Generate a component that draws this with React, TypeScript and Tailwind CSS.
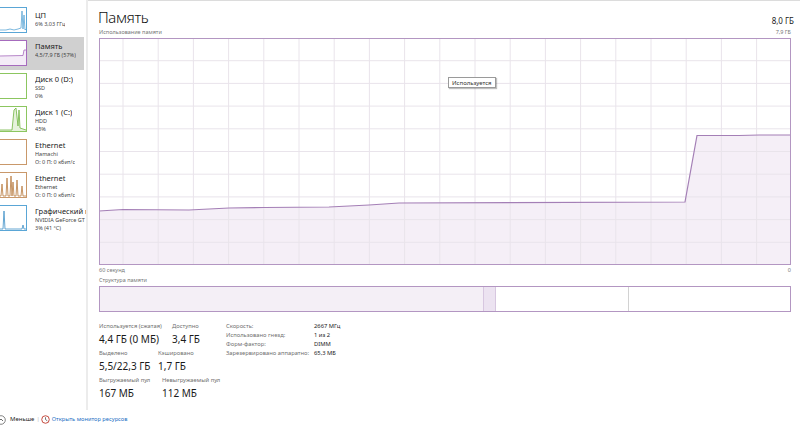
import React from "react";

const font = { fontFamily: '"Noto Sans", "Open Sans", sans-serif' };

type Item = {
  name: string;
  lines: string[];
  thumb: React.ReactNode;
  selected?: boolean;
};

function Thumb({ border, fill, children }: { border: string; fill?: string; children?: React.ReactNode }) {
  return (
    <svg width="29" height="26" viewBox="0 0 29 26" className="shrink-0 -ml-[2px]">
      <rect x="0.5" y="0.5" width="28" height="25" fill={fill ?? "#fff"} stroke={border} />
      {children}
    </svg>
  );
}

const items: Item[] = [
  {
    name: "ЦП",
    lines: ["6% 3,03 ГГц"],
    thumb: (
      <Thumb border="#5aa6d6">
        <polyline points="1,23 8,23 12,22 16,23 20,22 23,21 24,4 25,22 26,8 27,23 28,22" fill="none" stroke="#5aa6d6" strokeWidth="0.8" />
      </Thumb>
    ),
  },
  {
    name: "Память",
    lines: ["4,5/7,9 ГБ (57%)"],
    selected: true,
    thumb: (
      <Thumb border="#a66bbd" fill="#fff">
        <path d="M1,16 L25,15.5 L26,10 L28,10 L28,25 L1,25 Z" fill="#f4ecf7" />
        <polyline points="1,16 25,15.5 26,10 28,10" fill="none" stroke="#a66bbd" strokeWidth="0.8" />
      </Thumb>
    ),
  },
  {
    name: "Диск 0 (D:)",
    lines: ["SSD", "0%"],
    thumb: <Thumb border="#8cc660" />,
  },
  {
    name: "Диск 1 (C:)",
    lines: ["HDD", "45%"],
    thumb: (
      <Thumb border="#8cc660" fill="#fff">
        <path d="M1,24 L14,24 L16,4 L18,2 L20,20 L21,4 L22,22 L28,24 L28,25 L1,25 Z" fill="#e6f2dc" />
        <polyline points="1,24 14,24 16,4 18,2 20,20 21,4 22,22 28,24" fill="none" stroke="#6fb43f" strokeWidth="0.8" />
      </Thumb>
    ),
  },
  {
    name: "Ethernet",
    lines: ["Hamachi", "О: 0 П: 0 кбит/с"],
    thumb: <Thumb border="#c9986a" />,
  },
  {
    name: "Ethernet",
    lines: ["Ethernet", "О: 0 П: 0 кбит/с"],
    thumb: (
      <Thumb border="#c9986a">
        <polyline
          points="1,24 3,24 4,12 5,24 8,24 9,6 10,24 12,24 13,4 14,24 15,10 16,24 18,24 19,8 20,24 23,24 24,14 25,24 28,24"
          fill="none"
          stroke="#b77a3e"
          strokeWidth="0.8"
        />
      </Thumb>
    ),
  },
  {
    name: "Графический п",
    lines: ["NVIDIA GeForce GT", "3% (41 °C)"],
    thumb: (
      <Thumb border="#5aa6d6">
        <polyline points="1,24 5,24 6,6 7,24 24,24 25,20 26,24 28,24" fill="none" stroke="#3d8fc6" strokeWidth="0.8" />
      </Thumb>
    ),
  },
];

function Sidebar() {
  return (
    <div className="w-[88px] shrink-0 border-r-2 border-[#ececec] pt-[4px] overflow-hidden">
      {items.map((it, i) => (
        <div
          key={i}
          className={
            "h-[33px] flex items-start gap-[8px] pt-[3px] " +
            (it.selected ? "bg-[#d0d0d0] w-[84px]" : "")
          }
        >
          {it.thumb}
          <div className={"flex flex-col whitespace-nowrap overflow-hidden " + (i === 0 ? "pt-[4px]" : "pt-[2px]")}>
            <span className="text-[7.5px] leading-[9px] text-[#1a1a1a]">{it.name}</span>
            {it.lines.map((l, j) => (
              <span key={j} className="text-[5.5px] leading-[8px] text-[#444]">
                {l}
              </span>
            ))}
          </div>
        </div>
      ))}
    </div>
  );
}

const gridX = Array.from({ length: 19 }, (_, k) => 24 + k * 35.2);
const gridY = Array.from({ length: 9 }, (_, k) => 22.7 * (k + 1));

const linePts: [number, number][] = [
  [0, 173],
  [24, 171.5],
  [90, 172],
  [130, 170],
  [165, 169.5],
  [230, 169],
  [270, 167],
  [300, 165],
  [586, 164],
  [598, 97.5],
  [640, 97.5],
  [660, 97],
  [692, 97],
];

function UsageChart() {
  const line = linePts.map((p) => p.join(",")).join(" ");
  const area = `M0,227 L${linePts.map((p) => p.join(",")).join(" L")} L692,227 Z`;
  return (
    <div className="relative">
      <svg width="692" height="227" viewBox="0 0 692 227" className="block">
        <rect x="0" y="0" width="692" height="227" fill="#fff" />
        <path d={area} fill="#f5eff7" />
        {gridX.map((x) => (
          <line key={x} x1={x} y1="0" x2={x} y2="227" stroke="#e9e4eb" strokeWidth="1" />
        ))}
        {gridY.map((y) => (
          <line key={y} x1="0" y1={y} x2="692" y2={y} stroke="#e9e4eb" strokeWidth="1" />
        ))}
        <polyline points={line} fill="none" stroke="#a47fb6" strokeWidth="1.2" />
        <rect x="0.5" y="0.5" width="691" height="226" fill="none" stroke="#b396c2" strokeWidth="1" />
      </svg>
      <div className="absolute left-[349px] top-[39px] bg-white border border-[#9a9a9a] shadow-[1px_1px_1px_rgba(0,0,0,0.25)] px-[3px] h-[11px] flex items-center">
        <span className="text-[6px] leading-none text-[#333]">Используется</span>
      </div>
    </div>
  );
}

function StructureBar() {
  return (
    <div className="h-[26px] border border-[#b396c2] flex">
      <div className="w-[383px] bg-[#f4eff6]" />
      <div className="w-[13px] bg-[#ece3f1] border-x border-[#d7c7e0]" />
      <div className="w-[133px] bg-white border-r border-[#d2d2d2]" />
      <div className="flex-1 bg-white" />
    </div>
  );
}

function Stat({ label, value, w }: { label: string; value: string; w?: string }) {
  return (
    <div className={"flex flex-col " + (w ?? "")}>
      <span className="text-[5.8px] leading-[9px] text-[#707070] whitespace-nowrap">{label}</span>
      <span className="text-[10px] leading-[17px] text-[#1a1a1a] whitespace-nowrap">{value}</span>
    </div>
  );
}

function Details() {
  const rows = [
    ["Скорость:", "2667 МГц"],
    ["Использовано гнезд:", "1 из 2"],
    ["Форм-фактор:", "DIMM"],
    ["Зарезервировано аппаратно:", "65,3 МБ"],
  ];
  return (
    <div className="flex mt-[10px]">
      <div className="flex flex-col gap-[1px] w-[127px] shrink-0">
        <div className="flex">
          <Stat label="Используется (сжатая)" value="4,4 ГБ (0 МБ)" w="w-[73px]" />
          <Stat label="Доступно" value="3,4 ГБ" />
        </div>
        <div className="flex">
          <Stat label="Выделено" value="5,5/22,3 ГБ" w="w-[59px]" />
          <Stat label="Кэшировано" value="1,7 ГБ" />
        </div>
        <div className="flex">
          <Stat label="Выгружаемый пул" value="167 МБ" w="w-[63px]" />
          <Stat label="Невыгружаемый пул" value="112 МБ" />
        </div>
      </div>
      <div className="flex flex-col">
        {rows.map(([k, v]) => (
          <div key={k} className="flex h-[9px] items-center">
            <span className="w-[88px] text-[5.8px] text-[#707070] whitespace-nowrap">{k}</span>
            <span className="text-[5.8px] text-[#1a1a1a] whitespace-nowrap">{v}</span>
          </div>
        ))}
      </div>
    </div>
  );
}

function Main() {
  return (
    <div className="flex-1 border-t border-[#dcdcdc] pl-[11px]">
      <div className="w-[692px]">
        <div className="flex justify-between items-end h-[26px] pt-[6px]">
          <span className="text-[15px] leading-[20px] font-light tracking-[-0.4px] text-[#111] -ml-[1px]">Память</span>
          <span className="text-[8px] leading-[12px] text-[#222] -mr-[3px]">8,0 ГБ</span>
        </div>
        <div className="flex justify-between h-[11px] items-center">
          <span className="text-[5.5px] text-[#777]">Использование памяти</span>
          <span className="text-[5.5px] text-[#777]">7,9 ГБ</span>
        </div>
        <UsageChart />
        <div className="flex justify-between h-[10px] items-center">
          <span className="text-[5.5px] text-[#777]">60 секунд</span>
          <span className="text-[5.5px] text-[#777]">0</span>
        </div>
        <div className="flex h-[11px] items-center">
          <span className="text-[5.5px] text-[#777]">Структура памяти</span>
        </div>
        <StructureBar />
        <Details />
      </div>
    </div>
  );
}

export default function App() {
  return (
    <div className="w-[800px] h-[429px] bg-white flex flex-col overflow-hidden" style={font}>
      <div className="flex h-[410px]">
        <Sidebar />
        <Main />
      </div>
      <div className="flex items-center h-[19px] text-[6px]">
        <svg width="10" height="10" viewBox="0 0 10 10" className="-ml-[4px]">
          <circle cx="5" cy="5" r="4.3" fill="none" stroke="#666" strokeWidth="0.8" />
          <polyline points="3,6 5,4 7,6" fill="none" stroke="#444" strokeWidth="0.8" />
        </svg>
        <span className="ml-[4px] text-[#222]">Меньше</span>
        <span className="ml-[2px] mr-[1px] text-[#bbb]">|</span>
        <svg width="9" height="9" viewBox="0 0 10 10">
          <circle cx="5" cy="5" r="4.2" fill="#fff" stroke="#c0392b" strokeWidth="1" />
          <polyline points="5,2.5 5,5 7,6.5" fill="none" stroke="#555" strokeWidth="0.9" />
        </svg>
        <span className="ml-[2px] text-[5.7px] text-[#1a6fc4]">Открыть монитор ресурсов</span>
      </div>
    </div>
  );
}
